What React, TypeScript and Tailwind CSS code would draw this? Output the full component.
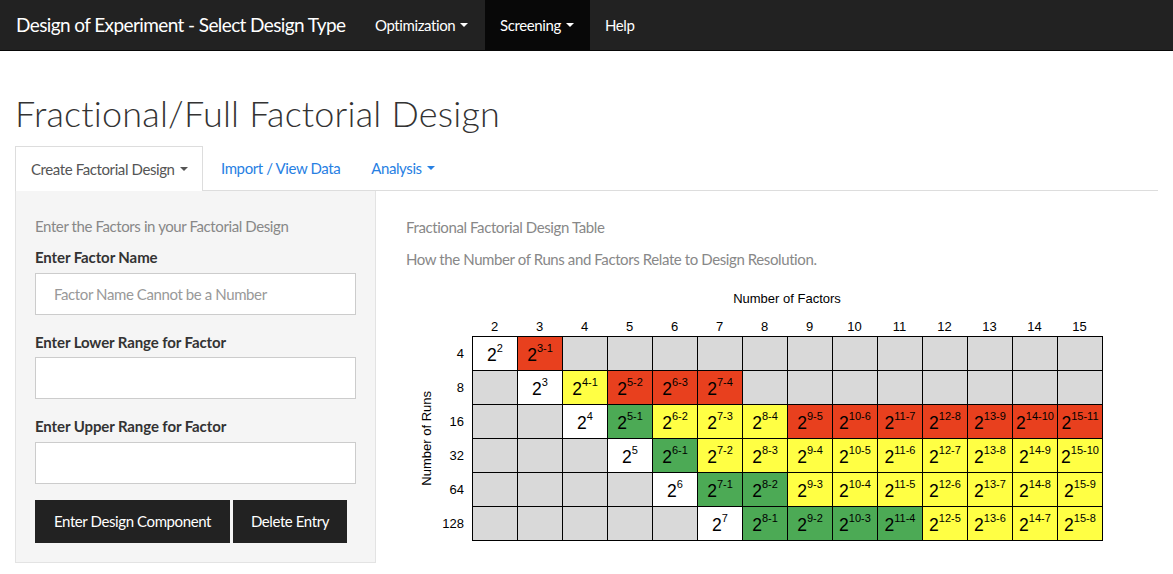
import React from "react";

const FACTORS = [2, 3, 4, 5, 6, 7, 8, 9, 10, 11, 12, 13, 14, 15];
const RUNS = [4, 8, 16, 32, 64, 128];

// color per row (exponent r), per factor f
const COLORS: Record<number, string> = {
  2: "w r g g g g g g g g g g g g",
  3: "g w y r r r g g g g g g g g",
  4: "g g w n y y y r r r r r r r",
  5: "g g g w n y y y y y y y y y",
  6: "g g g g w n n y y y y y y y",
  7: "g g g g g w n n n n y y y y",
};

const bg: Record<string, string> = {
  g: "bg-[#d9d9d9]",
  w: "bg-white",
  r: "bg-[#e8401e]",
  y: "bg-[#ffff44]",
  n: "bg-[#4caa55]",
};

function Caret() {
  return (
    <span className="ml-[5px] inline-block h-0 w-0 border-x-[4px] border-t-[4px] border-x-transparent border-t-current align-middle" />
  );
}

function DesignTable() {
  return (
    <div className="mt-[21px] flex flex-col font-['Liberation_Sans',Arial,sans-serif] tracking-normal text-black">
      <div className="ml-[66px] w-[630px] text-center text-[13px] leading-[15px]">Number of Factors</div>
      <div className="ml-[66px] mt-[13px] grid grid-cols-[repeat(14,45px)] text-[13px] leading-[15px]">
        {FACTORS.map((f) => (
          <div key={f} className="text-center">
            {f}
          </div>
        ))}
      </div>
      <div className="mt-[2px] flex">
        <div className="flex w-[40px] items-center justify-center">
          <span className="rotate-180 text-[13px] leading-[15px] [writing-mode:vertical-rl]">Number of Runs</span>
        </div>
        <div className="flex w-[26px] flex-col pt-px">
          {RUNS.map((r) => (
            <div key={r} className="flex h-[34px] items-center justify-end pr-[8px] text-[13px]">
              {r}
            </div>
          ))}
        </div>
        <div className="border-l border-t border-black">
          {RUNS.map((runs, ri) => {
            const r = ri + 2;
            const cols = COLORS[r].split(" ");
            return (
              <div key={runs} className="grid grid-cols-[repeat(14,45px)]">
                {FACTORS.map((f, fi) => {
                  const c = cols[fi];
                  const p = f - r;
                  return (
                    <div
                      key={f}
                      className={`flex h-[34px] items-center justify-center border-b border-r border-black ${bg[c]}`}
                    >
                      {c !== "g" && (
                        <span className="mt-[5px] whitespace-nowrap leading-none">
                          <span className="text-[17.5px]">2</span>
                          <span className="relative top-[-9px] text-[11px]">{p > 0 ? `${f}-${p}` : `${f}`}</span>
                        </span>
                      )}
                    </div>
                  );
                })}
              </div>
            );
          })}
        </div>
      </div>
    </div>
  );
}

export default function App() {
  return (
    <div className="min-h-[574px] bg-white font-['Lato','Open_Sans',sans-serif] text-[15px] tracking-[-0.4px] text-[#333]">
      {/* navbar */}
      <nav className="flex h-[51px] items-stretch border-b border-[#080808] bg-[#222]">
        <div className="flex w-[360px] items-center whitespace-nowrap pl-[16px] text-[19px] tracking-[-0.6px] text-white">
          Design of Experiment - Select Design Type
        </div>
        <div className="flex w-[125px] items-center pl-[15px] text-white">
          Optimization
          <Caret />
        </div>
        <div className="flex w-[105px] items-center bg-[#080808] pl-[15px] text-white">
          Screening
          <Caret />
        </div>
        <div className="flex items-center pl-[15px] text-white">Help</div>
      </nav>

      <div className="px-[15px]">
        <h1 className="mt-[42px] mb-[13px] h-[40px] text-[36px] font-light leading-[40px] tracking-[0.2px] text-[#333]">
          Fractional/Full Factorial Design
        </h1>

        {/* tabs */}
        <div className="flex h-[45px] border-b border-[#ddd]">
          <div className="-mb-px flex w-[188px] items-center border border-b-0 border-[#ddd] bg-white pl-[15px] text-[#555]">
            Create Factorial Design
            <Caret />
          </div>
          <div className="flex items-center pl-[18px] pr-[16px] text-[#2780e3]">Import / View Data</div>
          <div className="flex items-center px-[15px] text-[#2780e3]">
            Analysis
            <Caret />
          </div>
        </div>

        <div className="flex gap-[30px]">
          {/* sidebar */}
          <div className="flex w-[361px] flex-col border border-t-0 border-[#e3e3e3] bg-[#f5f5f5] px-[19px] pt-[24px] pb-[19px]">
            <div className="h-[22px] leading-[22px] text-[#888]">Enter the Factors in your Factorial Design</div>
            <div className="mt-[9px] h-[22px] font-bold leading-[22px] tracking-[-0.1px]">Enter Factor Name</div>
            <input
              className="mt-[5px] h-[42px] w-full border border-[#ccc] bg-white px-[18px] text-[15px] outline-none placeholder:text-[#999]"
              placeholder="Factor Name Cannot be a Number"
            />
            <div className="mt-[16px] h-[22px] font-bold leading-[22px] tracking-[-0.1px]">Enter Lower Range for Factor</div>
            <input className="mt-[4px] h-[42px] w-full border border-[#ccc] bg-white px-[18px] outline-none" />
            <div className="mt-[16px] h-[22px] font-bold leading-[22px] tracking-[-0.1px]">Enter Upper Range for Factor</div>
            <input className="mt-[5px] h-[42px] w-full border border-[#ccc] bg-white px-[18px] outline-none" />
            <div className="mt-[16px] flex gap-[3px]">
              <button className="h-[43px] w-[195px] bg-[#222] text-white">Enter Design Component</button>
              <button className="h-[43px] w-[114px] bg-[#222] text-white">Delete Entry</button>
            </div>
          </div>

          {/* main */}
          <div className="flex flex-col pt-[25px]">
            <div className="h-[22px] leading-[22px] text-[#888]">Fractional Factorial Design Table</div>
            <div className="mt-[10px] h-[22px] leading-[22px] text-[#888]">
              How the Number of Runs and Factors Relate to Design Resolution.
            </div>
            <DesignTable />
          </div>
        </div>
      </div>
    </div>
  );
}
